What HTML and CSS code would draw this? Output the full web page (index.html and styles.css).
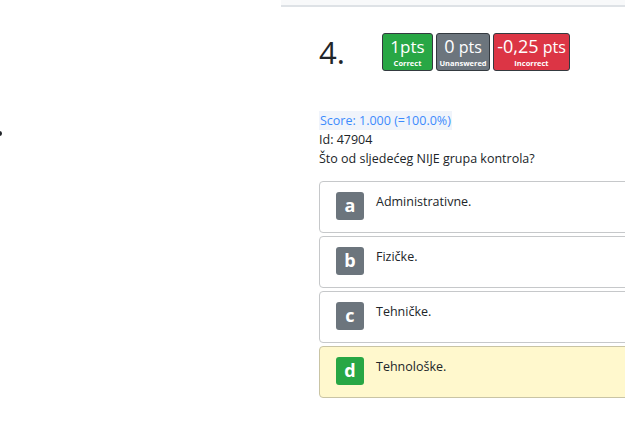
FILE: index.html
```html
<!DOCTYPE html>
<html>
<head>
<meta charset="utf-8">
<link rel="stylesheet" href="styles.css">
</head>
<body>
<div class="page">
  <aside class="side">
    <ul class="side-list"><li></li></ul>
  </aside>
  <main class="main">
    <div class="topbar"></div>
    <div class="content">
      <div class="q-head">
        <div class="q-num">4.</div>
        <div class="badges">
          <div class="badge badge-green"><span class="pts">1pts</span><span class="lbl">Correct</span></div>
          <div class="badge badge-gray"><span class="pts"><span class="num">0</span> pts</span><span class="lbl">Unanswered</span></div>
          <div class="badge badge-red"><span class="pts"><span class="num">-0,25</span> pts</span><span class="lbl">Incorrect</span></div>
        </div>
      </div>
      <div class="meta">
        <div><span class="score">Score: 1.000 (=100.0%)</span></div>
        <div>Id: 47904</div>
        <div>Što od sljedećeg NIJE grupa kontrola?</div>
      </div>
      <div class="options">
        <div class="option"><span class="letter">a</span><span class="opt-text">Administrativne.</span></div>
        <div class="option"><span class="letter">b</span><span class="opt-text">Fizičke.</span></div>
        <div class="option"><span class="letter">c</span><span class="opt-text">Tehničke.</span></div>
        <div class="option option-correct"><span class="letter letter-green">d</span><span class="opt-text">Tehnološke.</span></div>
      </div>
    </div>
  </main>
</div>
</body>
</html>
```

FILE: styles.css
```css
html, body {
  margin: 0;
  padding: 0;
  background: #fff;
  font-family: "Open Sans", "Noto Sans", sans-serif;
  color: #212529;
  overflow: hidden;
}
.page {
  display: flex;
  width: 625px;
  height: 438px;
}
.side {
  width: 281px;
  flex: none;
}
.side-list {
  margin: 123px 0 0 0;
  padding-left: 13px;
  font-size: 13px;
  line-height: 20px;
}
.main {
  flex: 1;
  min-width: 0;
}
.topbar {
  height: 5px;
  background: #f8f9fa;
  border-bottom: 2px solid #dee2e6;
}
.content {
  padding: 26px 0 0 38px;
}
.q-head {
  display: flex;
  align-items: center;
  height: 38px;
}
.q-num {
  width: 63px;
  font-size: 31px;
  font-weight: 400;
  color: #212529;
  line-height: 38px;
}
.badges {
  display: flex;
  gap: 3px;
}
.badge {
  display: flex;
  flex-direction: column;
  align-items: center;
  justify-content: center;
  height: 36px;
  padding: 0 4px;
  border: 1px solid #343a40;
  border-radius: 3px;
  color: #fff;
}
.badge-green { background: #28a745; width: 41px; }
.badge-gray { background: #6c757d; width: 44px; }
.badge-red { background: #dc3545; width: 67px; }
.pts {
  font-size: 16px;
  line-height: 20px;
  white-space: nowrap;
}
.badge-green .pts { font-size: 17px; }
.num {
  font-size: 18px;
}
.lbl {
  font-size: 7.5px;
  font-weight: 700;
  line-height: 10px;
  margin-top: 1px;
}
.meta {
  margin-top: 40px;
  font-size: 12.5px;
  line-height: 19px;
}
.score {
  color: #3d8bfd;
  background: #f0f4fb;
  padding: 1px 1px;
}
.options {
  margin-top: 13px;
  display: flex;
  flex-direction: column;
  gap: 3px;
}
.option {
  display: flex;
  align-items: flex-start;
  gap: 12px;
  height: 30px;
  padding: 10px 16px;
  border: 1px solid #c6c8ca;
  border-radius: 4px;
  margin-right: -10px;
  background: #fff;
}
.option-correct {
  background: #fff8cd;
  border-color: #c9c4a4;
}
.letter {
  width: 28px;
  height: 28px;
  flex: none;
  border-radius: 3px;
  background: #6c757d;
  color: #fff;
  font-weight: 700;
  font-size: 18px;
  line-height: 27px;
  text-align: center;
}
.letter-green { background: #28a745; }
.opt-text {
  font-size: 12.5px;
  line-height: 18px;
  padding-top: 1px;
}
```
